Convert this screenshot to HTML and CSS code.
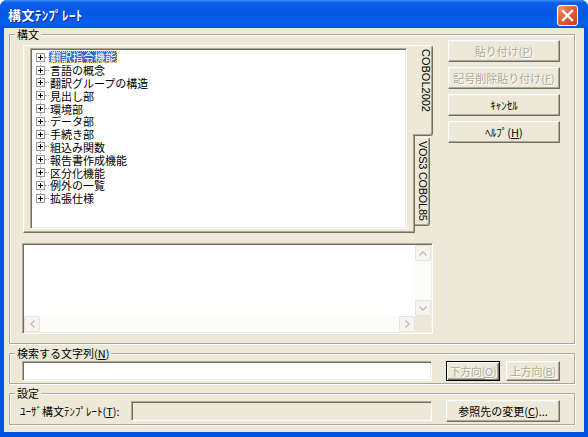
FILE: index.html
```html
<!DOCTYPE html>
<html lang="ja">
<head>
    <meta charset="UTF-8">
    <title>構文ﾃﾝﾌﾟﾚｰﾄ</title>
    <link rel="stylesheet" href="styles.css">
</head>
<body>
<div class="window">
    <!-- タイトルバー -->
    <div class="titlebar">
        <span class="title">構文ﾃﾝﾌﾟﾚｰﾄ</span>
        <span class="close">
            <svg width="13" height="13" viewBox="0 0 13 13">
                <path d="M2 2 L11 11 M11 2 L2 11" stroke="#fff" stroke-width="2.4" stroke-linecap="square"/>
            </svg>
        </span>
    </div>
    <div class="client">
        <!-- 構文 -->
        <fieldset class="group">
            <legend>構文</legend>
            <div class="group-body syntax">
                <div class="syntax-left">
                    <div class="tabctl">
                        <div class="tabpage">
                            <div class="tree">
                                <ul>
                                    <li class="sel"><i></i><b></b><span>翻訳指令機能</span></li>
                                    <li><i></i><b></b><span>言語の概念</span></li>
                                    <li><i></i><b></b><span>翻訳グループの構造</span></li>
                                    <li><i></i><b></b><span>見出し部</span></li>
                                    <li><i></i><b></b><span>環境部</span></li>
                                    <li><i></i><b></b><span>データ部</span></li>
                                    <li><i></i><b></b><span>手続き部</span></li>
                                    <li><i></i><b></b><span>組込み関数</span></li>
                                    <li><i></i><b></b><span>報告書作成機能</span></li>
                                    <li><i></i><b></b><span>区分化機能</span></li>
                                    <li><i></i><b></b><span>例外の一覧</span></li>
                                    <li><i></i><b></b><span>拡張仕様</span></li>
                                </ul>
                            </div>
                        </div>
                        <div class="tabstrip">
                            <div class="tab active">COBOL2002</div>
                            <div class="tab">VOS3 COBOL85</div>
                        </div>
                    </div>
                    <!-- 内容表示 -->
                    <div class="preview">
                        <div class="preview-text"></div>
                        <div class="vscroll">
                            <span class="arrow"><svg width="8" height="5" viewBox="0 0 8 5"><path d="M0.5 4.5 L4 1 L7.5 4.5" fill="none" stroke="#C3C1B5" stroke-width="1.5"/></svg></span>
                            <span class="track"></span>
                            <span class="arrow"><svg width="8" height="5" viewBox="0 0 8 5"><path d="M0.5 0.5 L4 4 L7.5 0.5" fill="none" stroke="#C3C1B5" stroke-width="1.5"/></svg></span>
                        </div>
                        <div class="hscroll">
                            <span class="arrow"><svg width="5" height="8" viewBox="0 0 5 8"><path d="M4.5 0.5 L1 4 L4.5 7.5" fill="none" stroke="#C3C1B5" stroke-width="1.5"/></svg></span>
                            <span class="track"></span>
                            <span class="arrow"><svg width="5" height="8" viewBox="0 0 5 8"><path d="M0.5 0.5 L4 4 L0.5 7.5" fill="none" stroke="#C3C1B5" stroke-width="1.5"/></svg></span>
                        </div>
                        <div class="corner"></div>
                    </div>
                </div>
                <div class="btncol">
                    <button class="btn" disabled>貼り付け(<u>P</u>)</button>
                    <button class="btn" disabled>記号削除貼り付け(<u>F</u>)</button>
                    <button class="btn">ｷｬﾝｾﾙ</button>
                    <button class="btn">ﾍﾙﾌﾟ(<u>H</u>)</button>
                </div>
            </div>
        </fieldset>

        <!-- 検索 -->
        <fieldset class="group">
            <legend>検索する文字列(<u>N</u>)</legend>
            <div class="group-body search">
                <input class="edit" type="text">
                <button class="btn small default" disabled>下方向(<u>O</u>)</button>
                <button class="btn small" disabled>上方向(<u>B</u>)</button>
            </div>
        </fieldset>

        <!-- 設定 -->
        <fieldset class="group">
            <legend>設定</legend>
            <div class="group-body settings">
                <label class="field-label">ﾕｰｻﾞ構文ﾃﾝﾌﾟﾚｰﾄ(<u>T</u>):</label>
                <input class="edit readonly" type="text" readonly>
                <button class="btn browse">参照先の変更(<u>C</u>)...</button>
            </div>
        </fieldset>
    </div>
</div>
</body>
</html>
```

FILE: styles.css
```css
body {
    margin: 0;
    padding: 0;
    background-color: #FFF;
}

.window {
    width: 588px;
    height: 437px;
    display: flex;
    flex-direction: column;
    background-color: #0552E2;
    border-radius: 7px 7px 0 0;
    font-family: "Noto Sans CJK JP", sans-serif;
    font-size: 11px;
    color: #000;
}

/* タイトルバー */
.titlebar {
    height: 28px;
    flex: none;
    display: flex;
    align-items: center;
    justify-content: space-between;
    padding: 0 10px 0 8px;
    border-radius: 7px 7px 0 0;
    background: linear-gradient(#3C8EF6 0, #0A5DE6 3px, #0457E4 14px, #0660EE 24px, #0553DC 28px);
}
.title {
    color: #FFF;
    font-size: 13px;
    font-weight: bold;
    letter-spacing: 0.4px;
    text-shadow: 1px 1px #0A2A8A;
    margin-top: 1px;
}
.close {
    width: 21px;
    height: 21px;
    box-sizing: border-box;
    display: flex;
    align-items: center;
    justify-content: center;
    border: 1px solid #FFF;
    border-radius: 3px;
    background: linear-gradient(135deg, #EE9A7C 0, #E0603A 45%, #C3401C 100%);
    margin-top: 2px;
}

.client {
    flex: 1;
    margin: 0 4px 5px;
    padding: 0 9px 0 5px;
    background-color: #ECE9D8;
    display: flex;
    flex-direction: column;
}

/* グループ枠 */
.group {
    margin: 0;
    padding: 0;
    min-width: 0;
    border: 1px solid #ACA899;
    box-shadow: inset 1px 1px #FFF, 1px 1px #FFF;
}
.group + .group {
    margin-top: 3px;
}
.group legend {
    margin-left: 5px;
    padding: 0 2px;
    line-height: 12px;
    background-color: #ECE9D8;
}
.group-body {
    display: flex;
}

.syntax {
    padding: 0 14px 9px 12px;
    justify-content: space-between;
}
.syntax-left {
    width: 411px;
}
.btncol {
    width: 112px;
    display: flex;
    flex-direction: column;
    gap: 5px;
}

/* ボタン */
.btn {
    height: 22px;
    padding: 0;
    margin: 0;
    box-sizing: border-box;
    white-space: nowrap;
    font-family: inherit;
    font-size: 11px;
    line-height: 12px;
    color: #000;
    background-color: #ECE9D8;
    border: 1px solid;
    border-color: #FFF #716F64 #716F64 #FFF;
    box-shadow: inset -1px -1px #ACA899, inset 1px 1px #F1EFE2;
}
.btn:disabled {
    color: #ACA899;
    text-shadow: 1px 1px #FFF;
}
.btn.small {
    width: 54px;
    height: 20px;
    letter-spacing: -0.3px;
}
.btn.default {
    border-color: #000;
    box-shadow: inset 1px 1px #FFF, inset -1px -1px #716F64, inset -2px -2px #ACA899;
}

/* タブ */
.tabctl {
    display: flex;
    height: 188px;
    margin: 5px 0 0 1px;
}
.tabpage {
    width: 392px;
    box-sizing: border-box;
    padding: 2px 7px 3px 6px;
    border: 1px solid;
    border-color: #FFF #716F64 #716F64 #FFF;
    box-shadow: inset -1px -1px #ACA899, inset 1px 1px #F1EFE2;
}
.tabstrip {
    display: flex;
    flex-direction: column;
    align-items: flex-start;
}
.tab {
    writing-mode: vertical-rl;
    white-space: nowrap;
    box-sizing: border-box;
    font-family: "Liberation Sans", sans-serif;
    font-size: 11px;
    line-height: 12px;
    background-color: #ECE9D8;
    border: 1px solid;
    border-color: #FFF #716F64 #716F64 transparent;
    border-left: none;
    border-radius: 0 3px 3px 0;
    box-shadow: inset -1px -1px #ACA899;
}
.tab.active {
    width: 20px;
    height: 91px;
    margin-left: -2px;
    padding: 3px 0 0 4px;
}
.tab:not(.active) {
    width: 15px;
    height: 89px;
    margin-top: 1px;
    padding: 3px 0 0 1px;
    letter-spacing: -0.3px;
}

/* ツリー */
.tree {
    height: 100%;
    box-sizing: border-box;
    background-color: #FFF;
    border: 1px solid;
    border-color: #ACA899 #FFF #FFF #ACA899;
    box-shadow: inset 1px 1px #716F64, inset -1px -1px #F1EFE2;
    padding: 2px 2px 0 2px;
}
.tree ul {
    list-style: none;
    margin: 0;
    padding: 0;
    background: repeating-linear-gradient(#A0A0A0 0 1px, transparent 1px 2px) 7px 6px / 1px calc(100% - 12px) no-repeat;
}
.tree li {
    height: 12.8px;
    display: flex;
    align-items: center;
    white-space: nowrap;
}
.tree i {
    width: 9px;
    height: 9px;
    box-sizing: border-box;
    margin-left: 3px;
    border: 1px solid #919B9C;
    background:
        linear-gradient(#000, #000) center / 5px 1px no-repeat,
        linear-gradient(#000, #000) center / 1px 5px no-repeat,
        #FFF;
}
.tree b {
    width: 4px;
    border-top: 1px dotted #A0A0A0;
}
.tree span {
    display: block;
    height: 12px;
    line-height: 12px;
    padding: 0 1px;
}
.tree li.sel span {
    color: #FFF;
    background-color: #316AC5;
    outline: 1px dotted #F0C080;
    outline-offset: -1px;
}

/* 内容表示欄 */
.preview {
    height: 91px;
    margin-top: 10px;
    box-sizing: border-box;
    border: 1px solid;
    border-color: #ACA899 #FFF #FFF #ACA899;
    box-shadow: inset 1px 1px #716F64, inset -1px -1px #F1EFE2;
    padding: 1px;
    display: grid;
    grid-template-columns: 1fr 16px;
    grid-template-rows: 1fr 16px;
}
.preview-text {
    background-color: #FFF;
}
.vscroll,
.hscroll {
    display: flex;
    background-color: #FBFBF8;
}
.vscroll {
    flex-direction: column;
}
.vscroll .track,
.hscroll .track {
    flex: 1;
}
.arrow {
    width: 16px;
    height: 16px;
    box-sizing: border-box;
    display: flex;
    align-items: center;
    justify-content: center;
    border: 1px solid #E6E4DA;
    border-radius: 2px;
    background-color: #F5F4EE;
}
.corner {
    background-color: #ECE9D8;
}

/* 入力欄 */
.edit {
    height: 20px;
    box-sizing: border-box;
    margin: 0;
    padding: 0 3px;
    font-family: inherit;
    font-size: 11px;
    background-color: #FFF;
    border: 1px solid;
    border-color: #ACA899 #FFF #FFF #ACA899;
    box-shadow: inset 1px 1px #716F64, inset -1px -1px #F1EFE2;
    outline: none;
}
.edit.readonly {
    background-color: #ECE9D8;
}

.search {
    padding: 2px 14px 2px 12px;
    gap: 6px;
}
.search .edit {
    flex: 1;
    margin-right: 8px;
}

.settings {
    padding: 1px 14px 2px 10px;
    align-items: center;
}
.field-label {
    width: 111px;
    line-height: 12px;
}
.settings .edit {
    flex: 1;
    margin-right: 14px;
}
.btn.browse {
    width: 114px;
}
```
